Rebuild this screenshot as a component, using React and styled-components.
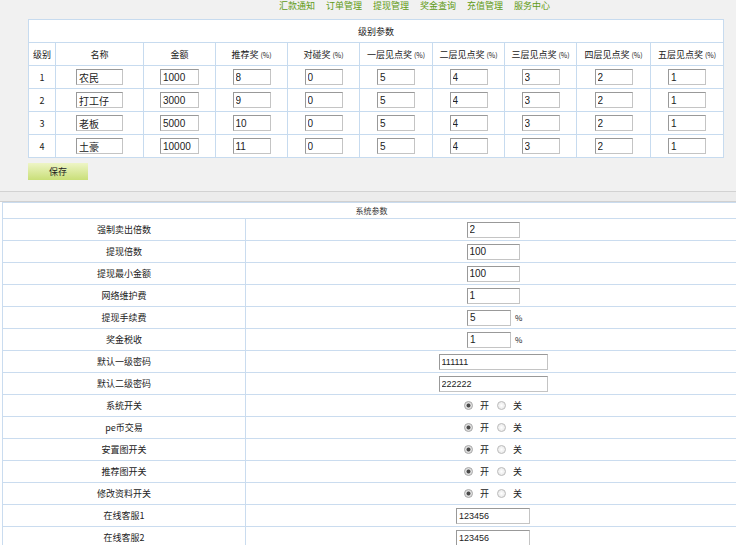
import React from "react";
import styled, { createGlobalStyle } from "styled-components";

const GlobalStyle = createGlobalStyle`
    html, body {
        margin: 0;
        padding: 0;
        background: #ffffff;
        overflow: hidden;
    }
    body {
        font-family: "Liberation Sans", "Noto Sans CJK SC", sans-serif;
        font-size: 9px;
        color: #222;
    }
`;

const TopPanel = styled.div`
    height: 192px;
    background: #f1f1f1;
    border-bottom: 1px solid #d2d2d2;
    box-sizing: border-box;
`;

const Nav = styled.div`
    display: flex;
    gap: 11px;
    height: 19px;
    padding-left: 279px;
    align-items: flex-start;
    line-height: 12px;
`;

const NavLink = styled.a`
    color: #5f9a14;
    font-family: "Noto Sans CJK SC", sans-serif;
    font-size: 9px;
    text-decoration: none;
`;

const LevelTable = styled.table`
    margin-left: 28px;
    width: 695px;
    table-layout: fixed;
    border-collapse: collapse;
    background: #ffffff;
    border: 1px solid #c3d8ee;

    td, th {
        border: 1px solid #c7dbef;
        padding: 0;
        text-align: center;
        font-weight: normal;
        font-size: 9px;
        font-family: "Noto Sans CJK SC", sans-serif;
        color: #222;
    }
    tr {
        height: 23px;
    }
`;

const Pct = styled.span`
    font-size: 7px;
    margin-left: 2px;
`;

const Field = styled.input`
    box-sizing: border-box;
    width: ${props => props.w}px;
    height: 16px;
    padding: 0 2px;
    margin: 0;
    border: 1px solid;
    border-color: #999 #c4c4c4 #c4c4c4 #999;
    background: #fff;
    font-family: "Liberation Sans", "Noto Sans CJK SC", sans-serif;
    font-size: ${props => props.fs || 10}px;
    color: #222;
    vertical-align: middle;
    outline: none;
`;

const SaveButton = styled.button`
    display: block;
    margin: 5px 0 0 28px;
    width: 60px;
    height: 17px;
    padding: 0;
    border: none;
    background: linear-gradient(#eef5c6, #c9df78);
    font-family: "Noto Sans CJK SC", sans-serif;
    font-size: 9px;
    color: #222;
    text-align: left;
    text-indent: 21px;
`;

const Band = styled.div`
    height: 9px;
    background: #ececec;
    border-bottom: 1px solid #d0d0d0;
`;

const SysTable = styled.table`
    margin-left: 2px;
    width: 738px;
    table-layout: fixed;
    border-collapse: collapse;
    background: #ffffff;

    td {
        border: 1px solid #cadcef;
        padding: 0;
        font-size: 9px;
        font-family: "Noto Sans CJK SC", sans-serif;
        color: #222;
        text-align: center;
    }
`;

const SysTitleRow = styled.tr`
    height: 16px;
    td {
        font-size: 8px;
        color: #333;
    }
`;

const SysRow = styled.tr`
    height: 22px;
`;

const Unit = styled.span`
    display: inline-block;
    font-size: 8px;
    margin-left: 4px;
    width: 4px;
    vertical-align: middle;
`;

const Radio = styled.input`
    appearance: none;
    -webkit-appearance: none;
    width: 9px;
    height: 9px;
    margin: 0;
    border-radius: 50%;
    border: 1px solid #bdbdbd;
    background: radial-gradient(circle, #ffffff 0, #e2e2e2 100%);
    vertical-align: middle;
    box-sizing: border-box;

    &:checked {
        background: radial-gradient(circle, #4a4a4a 0, #4a4a4a 1.6px, #e4e4e4 2.4px, #d6d6d6 100%);
        border-color: #a9a9a9;
    }
`;

const RadioLabel = styled.label`
    display: inline-flex;
    align-items: center;
    gap: 7px;
    margin: 0 4px;
    font-size: 9px;
`;

const navItems = ["汇款通知", "订单管理", "提现管理", "奖金查询", "充值管理", "服务中心"];

const cols = [27, 88, 72, 72, 72, 73, 72, 72, 74, 73];

const headers = [
    ["级别"], ["名称"], ["金额"], ["推荐奖", true], ["对碰奖", true],
    ["一层见点奖", true], ["二层见点奖", true], ["三层见点奖", true], ["四层见点奖", true], ["五层见点奖", true],
];

const levels = [
    ["1", "农民", "1000", "8"],
    ["2", "打工仔", "3000", "9"],
    ["3", "老板", "5000", "10"],
    ["4", "土豪", "10000", "11"],
];

const sysRows = [
    { label: "强制卖出倍数", kind: "input", value: "2", w: 53 },
    { label: "提现倍数", kind: "input", value: "100", w: 53 },
    { label: "提现最小金额", kind: "input", value: "100", w: 53 },
    { label: "网络维护费", kind: "input", value: "1", w: 53 },
    { label: "提现手续费", kind: "pct", value: "5", w: 44 },
    { label: "奖金税收", kind: "pct", value: "1", w: 44 },
    { label: "默认一级密码", kind: "input", value: "111111", w: 109, fs: 9 },
    { label: "默认二级密码", kind: "input", value: "222222", w: 109, fs: 9 },
    { label: "系统开关", kind: "radio" },
    { label: "pe币交易", kind: "radio" },
    { label: "安置图开关", kind: "radio" },
    { label: "推荐图开关", kind: "radio" },
    { label: "修改资料开关", kind: "radio" },
    { label: "在线客服1", kind: "input", value: "123456", w: 74, fs: 9 },
    { label: "在线客服2", kind: "input", value: "123456", w: 74, fs: 9 },
];

function SysValue({ row, name }) {
    if (row.kind === "radio") {
        return (
            <>
                <RadioLabel><Radio type="radio" name={name} defaultChecked />开</RadioLabel>
                <RadioLabel><Radio type="radio" name={name} />关</RadioLabel>
            </>
        );
    }
    if (row.kind === "pct") {
        return (
            <>
                <Field w={row.w} defaultValue={row.value} />
                <Unit>%</Unit>
            </>
        );
    }
    return <Field w={row.w} fs={row.fs} defaultValue={row.value} />;
}

export default function App() {
    return (
        <>
            <GlobalStyle />
            <TopPanel>
                <Nav>
                    {navItems.map(n => <NavLink key={n} href="#">{n}</NavLink>)}
                </Nav>
                <LevelTable>
                    <colgroup>
                        {cols.map((w, i) => <col key={i} style={{ width: w }} />)}
                    </colgroup>
                    <tbody>
                        <tr>
                            <td colSpan={10}>级别参数</td>
                        </tr>
                        <tr>
                            {headers.map(([h, pct]) => (
                                <th key={h}>{h}{pct && <Pct>(%)</Pct>}</th>
                            ))}
                        </tr>
                        {levels.map(([lv, name, amount, rec]) => (
                            <tr key={lv}>
                                <td>{lv}</td>
                                <td><Field w={47} defaultValue={name} /></td>
                                <td><Field w={39} defaultValue={amount} /></td>
                                <td><Field w={38} defaultValue={rec} /></td>
                                <td><Field w={38} defaultValue="0" /></td>
                                <td><Field w={38} defaultValue="5" /></td>
                                <td><Field w={38} defaultValue="4" /></td>
                                <td><Field w={38} defaultValue="3" /></td>
                                <td><Field w={38} defaultValue="2" /></td>
                                <td><Field w={38} defaultValue="1" /></td>
                            </tr>
                        ))}
                    </tbody>
                </LevelTable>
                <SaveButton>保存</SaveButton>
            </TopPanel>
            <Band />
            <SysTable>
                <colgroup>
                    <col style={{ width: 243 }} />
                    <col style={{ width: 495 }} />
                </colgroup>
                <tbody>
                    <SysTitleRow>
                        <td colSpan={2}>系统参数</td>
                    </SysTitleRow>
                    {sysRows.map((row, i) => (
                        <SysRow key={row.label}>
                            <td>{row.label}</td>
                            <td><SysValue row={row} name={"sw" + i} /></td>
                        </SysRow>
                    ))}
                </tbody>
            </SysTable>
        </>
    );
}
